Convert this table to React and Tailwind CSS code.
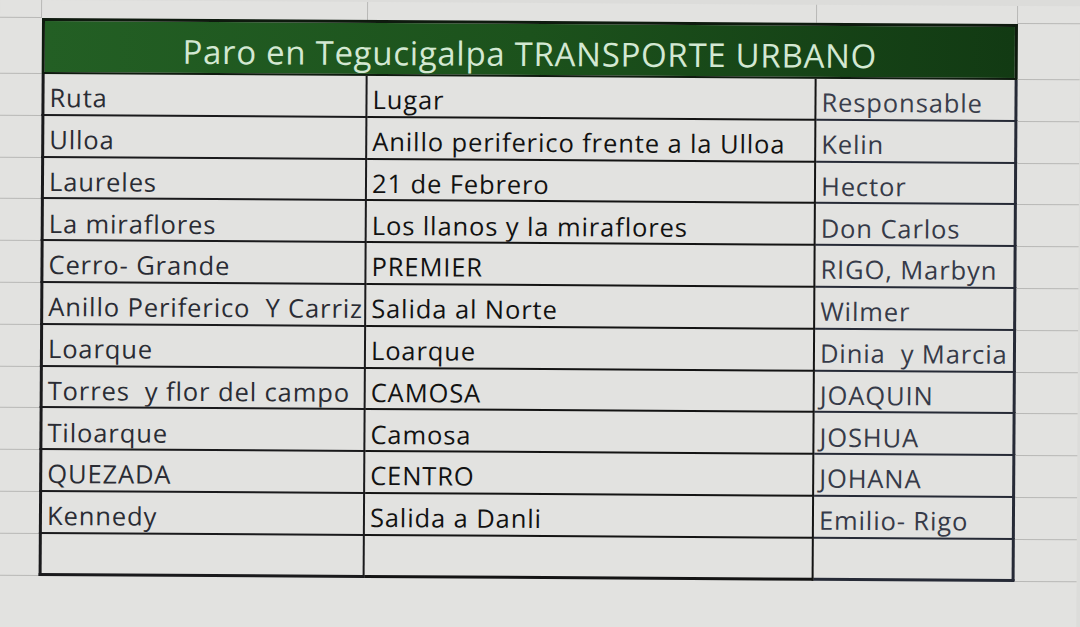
import React from 'react';

const rows = [
  ['Ulloa', 'Anillo periferico frente a la Ulloa', 'Kelin'],
  ['Laureles', '21 de Febrero', 'Hector'],
  ['La miraflores', 'Los llanos y la miraflores', 'Don Carlos'],
  ['Cerro- Grande', 'PREMIER', 'RIGO, Marbyn'],
  ['Anillo Periferico  Y Carriz', 'Salida al Norte', 'Wilmer'],
  ['Loarque', 'Loarque', 'Dinia  y Marcia'],
  ['Torres  y flor del campo', 'CAMOSA', 'JOAQUIN'],
  ['Tiloarque', 'Camosa', 'JOSHUA'],
  ['QUEZADA', 'CENTRO', 'JOHANA'],
  ['Kennedy', 'Salida a Danli', 'Emilio- Rigo'],
  ['', '', ''],
];

const font = { fontFamily: '"Open Sans", Lato, sans-serif' };

const Margin = ({ w = 'w-[42px]' }) => (
  <div className={`${w} shrink-0 border-b border-[#b8b8b6]`} />
);

const Cell = ({ w, border, color, children }) => (
  <div
    className={`${w} ${border} shrink-0 flex items-end pl-[5px] pb-[3px] overflow-hidden whitespace-pre text-[25.5px] tracking-[0.9px] leading-none ${color}`}
  >
    {children}
  </div>
);

const Row = ({ cells, last, header }) => {
  const bottom = last ? 'border-b-[3px]' : 'border-b-2';
  return (
    <div className="flex h-[41.8px]">
      <Margin />
      <Cell w="w-[326px]" border={`border-l-[3px] border-r-2 ${bottom} border-[#1a1a1c]`} color="text-[#2a2c34]">
        {cells[0]}
      </Cell>
      <Cell w="w-[449px]" border={`border-r-2 ${bottom} border-[#141414]`} color="text-[#121212]">
        {cells[1]}
      </Cell>
      <Cell
        w="w-[201px]"
        border={`border-r-[3px] ${bottom} border-[#262a36]`}
        color={header ? 'text-[#3a3e4c] pb-[1px]' : 'text-[#363a48]'}
      >
        {cells[2]}
      </Cell>
      <div className="flex-1 border-b border-[#b8b8b6]" />
    </div>
  );
};

export default function App() {
  return (
    <div className="w-[1080px] h-[627px] overflow-hidden bg-[#dcdcda]" style={font}>
      <div className="origin-[42px_18px] rotate-[0.35deg] bg-[#e2e2e0]">
        {/* strip above the table */}
        <div className="flex h-[18px]">
          <div className="w-[42px] border-r border-b border-[#b8b8b6]" />
          <div className="w-[326px] border-r border-[#b8b8b6]" />
          <div className="w-[449px] border-r border-[#b8b8b6]" />
          <div className="w-[201px] border-r border-[#b8b8b6]" />
          <div className="flex-1 border-b border-[#b8b8b6]" />
        </div>

        {/* title */}
        <div className="flex h-[56px]">
          <Margin />
          <div className="w-[976px] shrink-0 border-[3px] border-b-2 border-[#0e1a0e] bg-gradient-to-r from-[#235f24] via-[#1c521c] to-[#123a13] flex items-end justify-center pb-[5px]">
            <span className="text-[33px] tracking-[0.7px] leading-none text-[#d3e8d2]">
              Paro en Tegucigalpa TRANSPORTE URBANO
            </span>
          </div>
          <div className="flex-1 border-b border-[#b8b8b6]" />
        </div>

        <Row cells={['Ruta', 'Lugar', 'Responsable']} header />
        {rows.map((r, i) => (
          <Row key={i} cells={r} last={i === rows.length - 1} />
        ))}

        {/* rest of the sheet */}
        <div className="flex h-[60px]">
          <div className="w-[42px] border-b border-[#c4c4c2]" />
          <div className="w-[326px] border-b border-[#c4c4c2]" />
          <div className="w-[449px] border-b border-[#c4c4c2]" />
          <div className="w-[201px] border-b border-[#c4c4c2]" />
          <div className="flex-1 border-b border-[#c4c4c2]" />
        </div>
      </div>
    </div>
  );
}
